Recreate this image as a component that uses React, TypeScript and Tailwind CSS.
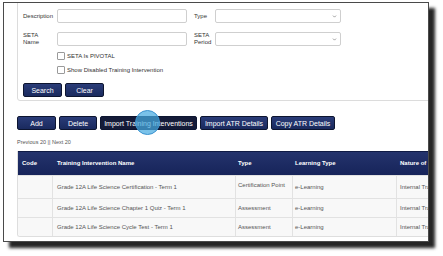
import { ChevronDown } from 'lucide-react';

const font = { fontFamily: '"Liberation Sans", Arial, sans-serif' };

function NavButton({ label, width, dark }: { label: string; width: string; dark?: boolean }) {
  return (
    <button
      className={`${width} h-[14px] rounded-[2px] border border-[#0d1530] text-white text-[7px] leading-none ${
        dark ? 'bg-[#141b38]' : 'bg-gradient-to-b from-[#2a3c78] to-[#1a2a5e]'
      }`}
    >
      {label}
    </button>
  );
}

function Checkbox({ label }: { label: string }) {
  return (
    <div className="flex items-center h-[10px] pl-[34px] gap-[2px]">
      <span className="w-[8px] h-[8px] border border-[#9a9a9a] rounded-[1px] bg-white" />
      <span className="text-[6px] text-[#333] leading-none">{label}</span>
    </div>
  );
}

const rows = [
  { name: 'Grade 12A Life Science Certification - Term 1', type: 'Certification Point', h: 'h-[23px]', top: true },
  { name: 'Grade 12A Life Science Chapter 1 Quiz - Term 1', type: 'Assessment', h: 'h-[19px]', top: false },
  { name: 'Grade 12A Life Science Cycle Test - Term 1', type: 'Assessment', h: 'h-[19px]', top: false },
];

export default function App() {
  return (
    <div className="w-[443px] h-[256px] bg-white overflow-hidden pt-[2px] pl-[3px]" style={font}>
      <div className="w-[426px] h-[240px] border border-[#4a4a4a] bg-white overflow-hidden shadow-[6px_6px_3px_rgba(0,0,0,0.85)] relative">
        {/* Search panel */}
        <div className="ml-[13px] -mt-[4px] w-[430px] border border-[#dcdcdc] rounded-[3px] pt-[9px] pl-[5px] pb-[3px]">
          <div className="flex items-center h-[14px]">
            <span className="w-[34px] text-[6px] text-[#333]">Description</span>
            <div className="w-[130px] h-[14px] border border-[#cfcfcf] rounded-[2px] bg-white" />
            <span className="w-[21px] ml-[7px] text-[6px] text-[#333]">Type</span>
            <div className="w-[126px] h-[14px] border border-[#cfcfcf] rounded-[2px] bg-white flex items-center justify-end pr-[3px]">
              <ChevronDown size={5} strokeWidth={3} className="text-[#666]" />
            </div>
          </div>
          <div className="flex items-center h-[14px] mt-[9px]">
            <span className="w-[34px] text-[6px] leading-[7px] text-[#333]">
              SETA
              <br />
              Name
            </span>
            <div className="w-[130px] h-[14px] border border-[#cfcfcf] rounded-[2px] bg-white" />
            <span className="w-[21px] ml-[7px] text-[6px] leading-[7px] text-[#333]">
              SETA
              <br />
              Period
            </span>
            <div className="w-[126px] h-[14px] border border-[#cfcfcf] rounded-[2px] bg-white flex items-center justify-end pr-[3px]">
              <ChevronDown size={5} strokeWidth={3} className="text-[#666]" />
            </div>
          </div>
          <div className="mt-[5px]">
            <Checkbox label="SETA Is PIVOTAL" />
          </div>
          <div className="mt-[4px]">
            <Checkbox label="Show Disabled Training Intervention" />
          </div>
          <div className="flex gap-[3px] mt-[8px]">
            <NavButton label="Search" width="w-[39px]" />
            <NavButton label="Clear" width="w-[39px]" />
          </div>
        </div>

        {/* Action buttons */}
        <div className="flex ml-[13px] mt-[15px] gap-[3px] relative">
          <NavButton label="Add" width="w-[39px]" />
          <NavButton label="Delete" width="w-[38px]" />
          <NavButton label="Import Training Interventions" width="w-[97px]" dark />
          <NavButton label="Import ATR Details" width="w-[68px]" />
          <NavButton label="Copy ATR Details" width="w-[64px]" />
          <span className="absolute left-[118px] top-[-6px] w-[25px] h-[25px] rounded-full bg-[rgba(70,170,225,0.72)] border border-[#3a92cf]" />
        </div>

        <div className="ml-[13px] mt-[9px] h-[6px] text-[5.5px] leading-[6px] text-[#555]">Previous 20 || Next 20</div>

        {/* Table */}
        <div className="ml-[13px] mt-[6px] w-[430px] border-l border-b border-[#dedede] rounded-bl-[3px] overflow-hidden">
          <div className="grid grid-cols-[35px_183px_57px_104px_51px] h-[24px] bg-gradient-to-b from-[#24336c] to-[#17245a] text-white text-[6px] font-bold items-center border-t border-[#0f1a44]">
            <span className="pl-[4px]">Code</span>
            <span className="pl-[4px]">Training Intervention Name</span>
            <span className="pl-[2px]">Type</span>
            <span className="pl-[2px]">Learning Type</span>
            <span className="pl-[3px] whitespace-nowrap">Nature of</span>
          </div>
          {rows.map((r) => (
            <div
              key={r.name}
              className={`grid grid-cols-[35px_183px_57px_104px_51px] ${r.h} bg-[#f8f8f8] text-[6px] text-[#555] border-t border-[#e2e2e2]`}
            >
              <span className="border-r border-[#e2e2e2]" />
              <span className="pl-[4px] flex items-center border-r border-[#e2e2e2]">{r.name}</span>
              <span className={`pl-[2px] flex border-r border-[#e2e2e2] whitespace-nowrap ${r.top ? 'items-start pt-[5px]' : 'items-center'}`}>
                {r.type}
              </span>
              <span className="pl-[2px] flex items-center border-r border-[#e2e2e2]">e-Learning</span>
              <span className="pl-[3px] flex items-center whitespace-nowrap">Internal Training</span>
            </div>
          ))}
        </div>
      </div>
    </div>
  );
}
